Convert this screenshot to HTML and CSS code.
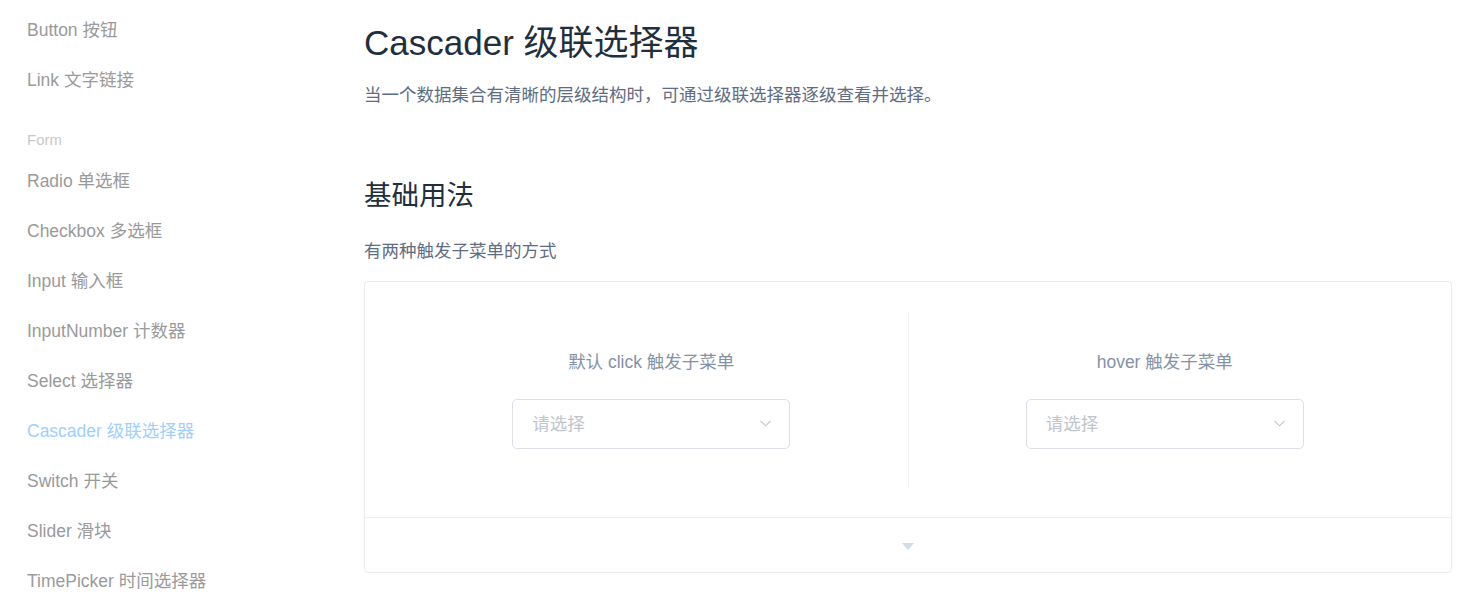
FILE: index.html
```html
<!DOCTYPE html>
<html lang="zh-CN">
<head>
<meta charset="utf-8">
<title>Cascader 级联选择器</title>
<link rel="stylesheet" href="styles.css">
</head>
<body>
<div class="page">
  <nav class="sidebar">
    <a class="nav-item">Button 按钮</a>
    <a class="nav-item">Link 文字链接</a>
    <div class="nav-group">Form</div>
    <a class="nav-item">Radio 单选框</a>
    <a class="nav-item">Checkbox 多选框</a>
    <a class="nav-item">Input 输入框</a>
    <a class="nav-item">InputNumber 计数器</a>
    <a class="nav-item">Select 选择器</a>
    <a class="nav-item active">Cascader 级联选择器</a>
    <a class="nav-item">Switch 开关</a>
    <a class="nav-item">Slider 滑块</a>
    <a class="nav-item">TimePicker 时间选择器</a>
  </nav>
  <main class="content">
    <h2 class="title">Cascader 级联选择器</h2>
    <p class="desc">当一个数据集合有清晰的层级结构时，可通过级联选择器逐级查看并选择。</p>
    <h3 class="section">基础用法</h3>
    <p class="desc sub">有两种触发子菜单的方式</p>
    <div class="demo">
      <div class="source">
        <div class="block first">
          <span class="demonstration">默认 click 触发子菜单</span>
          <div class="cascader">
            <span class="placeholder">请选择</span>
            <svg class="arrow" width="11" height="7" viewBox="0 0 11 7"><path d="M0.5 0.8 L5.5 5.8 L10.5 0.8" fill="none" stroke="#c0c4cc" stroke-width="1.1"/></svg>
          </div>
        </div>
        <div class="block">
          <span class="demonstration">hover 触发子菜单</span>
          <div class="cascader">
            <span class="placeholder">请选择</span>
            <svg class="arrow" width="11" height="7" viewBox="0 0 11 7"><path d="M0.5 0.8 L5.5 5.8 L10.5 0.8" fill="none" stroke="#c0c4cc" stroke-width="1.1"/></svg>
          </div>
        </div>
      </div>
      <div class="control"><span class="caret"></span></div>
    </div>
  </main>
</div>
</body>
</html>
```
FILE: styles.css
```css
html, body {
  margin: 0;
  padding: 0;
  background: #fff;
}
body {
  font-family: "Liberation Sans", Arial, "Noto Sans CJK SC", sans-serif;
}
.page {
  display: flex;
  width: 1480px;
}
.sidebar {
  width: 337px;
  padding: 5px 0 0 27px;
  display: flex;
  flex-direction: column;
  flex-shrink: 0;
}
.nav-item {
  display: block;
  height: 50px;
  line-height: 50px;
  font-size: 17.5px;
  color: #9a9a9a;
  white-space: nowrap;
}
.nav-item.active {
  color: #a0cffe;
}
.nav-group {
  padding: 25px 0 6px;
  line-height: 20px;
  font-size: 15px;
  color: #c8c8c8;
}
.content {
  flex: 1;
  padding: 0 28px 0 0;
  min-width: 0;
}
.title {
  margin: 17px 0 0;
  font-size: 35px;
  line-height: 52px;
  font-weight: 400;
  color: #1f2f3d;
}
.desc {
  margin: 13px 0 0;
  font-size: 17.5px;
  line-height: 26px;
  color: #5e6d82;
}
.section {
  margin: 68px 0 0;
  font-size: 27.5px;
  line-height: 40px;
  font-weight: 400;
  color: #1f2f3d;
}
.desc.sub {
  margin-top: 22px;
}
.demo {
  margin-top: 17px;
  border: 1px solid #ebebeb;
  border-radius: 4px;
}
.source {
  padding: 30px;
  display: flex;
}
.block {
  flex: 1;
  padding: 38px 0;
  display: flex;
  flex-direction: column;
  align-items: center;
}
.block.first {
  border-right: 1px solid #eff2f6;
}
.demonstration {
  display: block;
  font-size: 17.5px;
  line-height: 24px;
  color: #8492a6;
  margin-bottom: 25px;
}
.cascader {
  box-sizing: border-box;
  width: 278px;
  height: 50px;
  border: 1px solid #dcdfe6;
  border-radius: 5px;
  display: flex;
  align-items: center;
  justify-content: space-between;
  padding: 0 18px 0 19px;
}
.placeholder {
  font-size: 17.5px;
  color: #c0c4cc;
  margin-bottom: 4px;
}
.arrow {
  display: block;
  margin-bottom: 1px;
}
.control {
  height: 54px;
  border-top: 1px solid #eaeefb;
  display: flex;
  align-items: center;
  justify-content: center;
}
.caret {
  width: 0;
  height: 0;
  margin-top: 3px;
  border-left: 6px solid transparent;
  border-right: 6px solid transparent;
  border-top: 7px solid #d3dce6;
}
```
